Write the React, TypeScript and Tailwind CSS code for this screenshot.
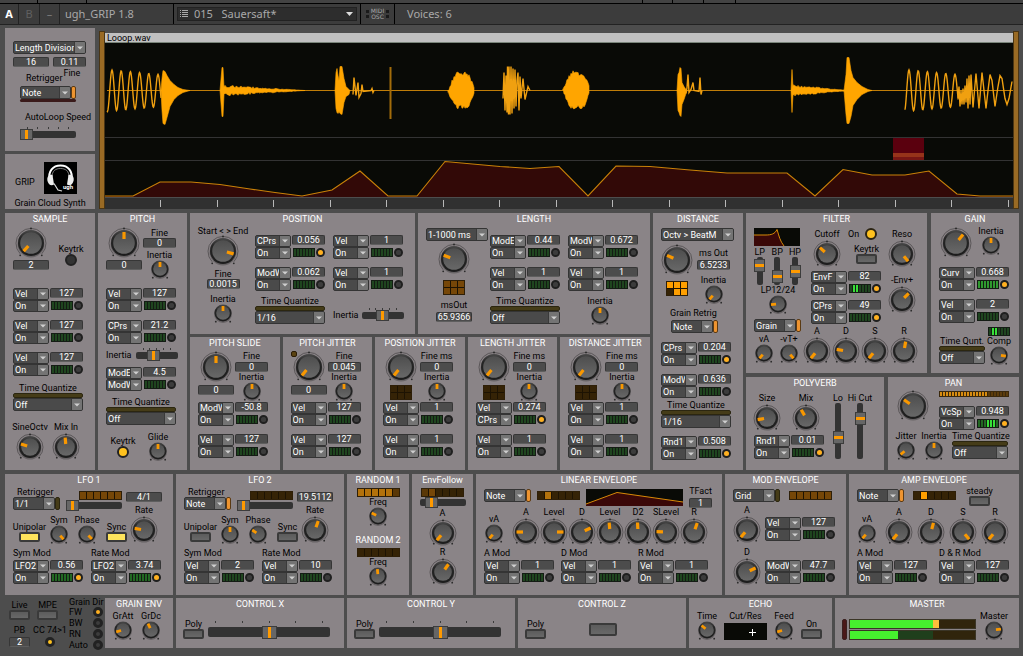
import { useState } from 'react';
import type { ReactNode } from 'react';
import clsx from 'clsx';

type KnobSize = 'sm' | 'md' | 'lg';

const KNOBS = {
    sm: { w: 20, h: 18, body: 9, face: 7, from: 2, to: 7, ring: 0 },
    md: { w: 26, h: 26, body: 11.5, face: 9, from: 3, to: 9.5, ring: 13 },
    lg: { w: 30, h: 30, body: 13.5, face: 11, from: 4, to: 11, ring: 15 },
};

function Defs() {
    return (
        <svg className="absolute size-0" aria-hidden="true">
            <defs>
                <linearGradient id="face" x1="0" y1="0" x2="0" y2="1">
                    <stop offset="0" stopColor="#4e4e4e" />
                    <stop offset="1" stopColor="#686868" />
                </linearGradient>
                <linearGradient id="rim" x1="0" y1="0" x2="0" y2="1">
                    <stop offset="0" stopColor="#4a4a4a" />
                    <stop offset="0.3" stopColor="#262626" />
                    <stop offset="1" stopColor="#1c1c1c" />
                </linearGradient>
            </defs>
        </svg>
    );
}

function Knob({ label, name, size = 'sm', angle = 0 }: { label?: string; name?: string; size?: KnobSize; angle?: number }) {
    const [value, setValue] = useState(angle);
    const k = KNOBS[size];
    const cx = k.w / 2;
    const cy = k.h / 2;
    const d = k.body * 0.8;
    return (
        <label
            className={clsx(
                'relative flex shrink-0 flex-col items-center',
                size === 'sm' && 'w-5',
                size === 'md' && 'w-[26px] gap-0.5',
                size === 'lg' && 'w-[30px]'
            )}
        >
            {label && <span className="whitespace-nowrap">{label}</span>}
            <svg width={k.w} height={k.h} className="block overflow-visible">
                {k.ring > 0 && (
                    <path
                        d={`M${cx - k.ring * 0.72} ${cy + k.ring * 0.72}A${k.ring} ${k.ring} 0 1 1 ${cx + k.ring * 0.72} ${cy + k.ring * 0.72}`}
                        fill="none"
                        stroke="#5a5658"
                        strokeWidth="1"
                    />
                )}
                <circle cx={cx - d} cy={cy + d + 1.5} r="0.9" fill="#2a2a2a" />
                <circle cx={cx + d} cy={cy + d + 1.5} r="0.9" fill="#2a2a2a" />
                {k.ring > 0 && <circle cx={cx} cy={cy - k.ring + 0.5} r="1" fill="#2a2a2a" />}
                <circle cx={cx} cy={cy + 1} r={k.body} fill="#000" opacity="0.25" />
                <circle cx={cx} cy={cy} r={k.body - 0.5} fill="url(#rim)" />
                <circle cx={cx} cy={cy} r={k.face - 0.2} fill="url(#face)" />
                <line
                    x1={cx}
                    x2={cx}
                    y1={cy - k.from}
                    y2={cy - k.to}
                    stroke="#f99800"
                    strokeWidth={size === 'sm' ? 2.8 : 3.2}
                    transform={`rotate(${value} ${cx} ${cy})`}
                />
            </svg>
            <input
                type="range"
                min={-140}
                max={140}
                value={value}
                aria-label={label ?? name}
                onChange={(e) => setValue(Number(e.target.value))}
                className="absolute inset-0 m-0 h-full w-full cursor-pointer opacity-0"
            />
        </label>
    );
}

function Num({ value, name = 'Value', className = 'w-[33px]' }: { value: string; name?: string; className?: string }) {
    return (
        <input
            defaultValue={value}
            aria-label={name}
            className={clsx(
                'block h-[10px] shrink-0 rounded-xs border border-[#363636] border-b-[#5e5e5e] bg-[#4c4c4c] p-0 text-center text-[9px] leading-[8px] text-white outline-none',
                className
            )}
        />
    );
}

function Pick({ value, options = [], name = 'Source', className = 'h-[13px] w-full' }: { value: string; options?: string[]; name?: string; className?: string }) {
    return (
        <div className={clsx('relative shrink-0 overflow-hidden rounded-xs border border-[#343434] bg-[#4a4a4a]', className)}>
            <select
                aria-label={name}
                defaultValue={value}
                className="block h-full w-full appearance-none bg-transparent py-0 pr-[11px] pl-px text-[9px] leading-[10px] text-white outline-none"
            >
                {[value, ...options].map((o) => (
                    <option key={o}>{o}</option>
                ))}
            </select>
            <span className="pointer-events-none absolute inset-y-0 right-0 flex w-[11px] items-center justify-center border-l border-[#3a3a3a] bg-[#747474]">
                <svg width="6" height="4" className="block">
                    <path d="M0 0.5h6L3 3.5z" fill="#cfcfcf" />
                </svg>
            </span>
        </div>
    );
}

function PickFlag({ value, on, name, className = 'w-[47px]' }: { value: string; on?: boolean; name: string; className?: string }) {
    return (
        <div className={clsx('flex h-[13px]', className)}>
            <Pick value={value} name={name} className="h-[13px] grow" />
            <span className={clsx('w-[5px] rounded-xs border', on ? 'border-[#5a3a14] bg-[#ee9430]' : 'border-[#2b2610] bg-[#453c18]')} />
        </div>
    );
}

const METER = {
    dim: 'bg-[#1f451f]',
    mid: 'bg-[#226822]',
    high: 'bg-[#2f9a2f]',
};

function Meter({ lit = [], tone = 'dim' }: { lit?: number[]; tone?: keyof typeof METER }) {
    return (
        <span className="flex h-[9px] w-[22px] gap-px border border-[#141c14] bg-[#141c14]">
            {[0, 1, 2, 3, 4, 5, 6].map((i) => (
                <i key={i} className={clsx('grow', lit.includes(i) ? 'bg-[#38e038]' : METER[tone])} />
            ))}
        </span>
    );
}

function Led({ on }: { on?: boolean }) {
    return (
        <span className="flex size-[9px] items-center justify-center rounded-full border-2 border-[#1f1f1f] bg-[#333]">
            <i className={clsx('size-[5px] shrink-0 rounded-full', on ? 'bg-[#ffb020]' : 'bg-[#3c3c3c]')} />
        </span>
    );
}

type ModProps = { a?: string; b?: string; v: string; on?: boolean; lit?: number[]; tone?: keyof typeof METER };

function Mod({ a = 'Vel', b = 'On', v, on, lit, tone }: ModProps) {
    return (
        <div className="flex w-[71px] shrink-0 gap-px">
            <div className="w-9">
                <Pick value={a} className="h-3 w-full" />
                <Pick value={b} name="Via" className="h-3 w-full" />
            </div>
            <div className="w-[34px]">
                <Num value={v} name="Amount" />
                <div className="mt-[3px] flex gap-px pl-px">
                    <Meter lit={lit} tone={tone} />
                    <Led on={on} />
                </div>
            </div>
        </div>
    );
}

function TimeQuantize({ value, label = 'Time Quantize', className = 'w-[70px]' }: { value: string; label?: string; className?: string }) {
    return (
        <div className={clsx('shrink-0', className)}>
            <p className="text-center whitespace-nowrap">{label}</p>
            <div className="h-[5px] rounded-xs border border-[#2b2610] bg-[#453c18]" />
            <Pick value={value} name={label} options={['1/8', '1/4']} />
        </div>
    );
}

function Slider({ name, value = 50, className, ticks }: { name: string; value?: number; className?: string; ticks?: boolean }) {
    return (
        <div className={clsx('shrink-0', className)}>
            {ticks && (
                <div className="flex h-0.5 justify-between px-[7px]">
                    {[0, 1, 2, 3, 4].map((i) => (
                        <i key={i} className="w-px bg-[#3a3a3a]" />
                    ))}
                </div>
            )}
            <input
                type="range"
                aria-label={name}
                defaultValue={value}
                className="my-[2px] block h-[7px] w-full appearance-none rounded-xs bg-[#333] [&::-webkit-slider-thumb]:h-[11px] [&::-webkit-slider-thumb]:w-[13px] [&::-webkit-slider-thumb]:appearance-none [&::-webkit-slider-thumb]:border [&::-webkit-slider-thumb]:border-[#3c3c3c] [&::-webkit-slider-thumb]:bg-[linear-gradient(90deg,#666_4px,#ff9a00_4px,#ff9a00_7px,#666_7px)]"
            />
        </div>
    );
}

function VSlider({ label, value, className = 'h-[28px]' }: { label: string; value: number; className?: string }) {
    return (
        <label className="flex w-3 flex-col items-center">
            <span className="whitespace-nowrap">{label}</span>
            <input
                type="range"
                defaultValue={value}
                className={clsx(
                    'block w-[6px] appearance-none rounded-xs bg-[#333] [direction:rtl] [writing-mode:vertical-lr] [&::-webkit-slider-thumb]:h-[13px] [&::-webkit-slider-thumb]:w-[11px] [&::-webkit-slider-thumb]:appearance-none [&::-webkit-slider-thumb]:border [&::-webkit-slider-thumb]:border-[#3c3c3c] [&::-webkit-slider-thumb]:bg-[linear-gradient(180deg,#666_4px,#ff9a00_4px,#ff9a00_7px,#666_7px)]',
                    className
                )}
            />
        </label>
    );
}

function Push({ label, on, name, className = 'h-[10px] w-[21px]' }: { label?: string; on?: boolean; name?: string; className?: string }) {
    return (
        <label className="flex w-[21px] shrink-0 flex-col items-center">
            {label && <span className="whitespace-nowrap">{label}</span>}
            <button
                aria-label={label ?? name}
                aria-pressed={!!on}
                className={clsx('block rounded-xs border-2 border-[#3a3a3a]', on ? 'bg-[#ffe45c]' : 'bg-linear-to-b from-[#5c5c5c] to-[#686868]', className)}
            />
        </label>
    );
}

function Lamp({ label, on, className = 'size-3 border-2' }: { label: string; on?: boolean; className?: string }) {
    return (
        <label className="flex w-[26px] flex-col items-center">
            <span className="whitespace-nowrap">{label}</span>
            <input
                type="checkbox"
                defaultChecked={on}
                className={clsx('appearance-none rounded-full border-[#222] bg-[#333] checked:bg-[#ffc21f]', className)}
            />
        </label>
    );
}

const CELL: Record<string, string> = {
    '0': 'bg-[#352306]',
    '1': 'bg-[#5a3807]',
    '2': 'bg-[#764708]',
    '3': 'bg-[#b3720c]',
    '4': 'bg-[#ff9f00]',
};

function Cells({ levels }: { levels: string }) {
    return (
        <div className="flex h-[9px] w-[43px] shrink-0 gap-px border border-[#2e1f08] bg-[#1d1303]">
            {[...levels].map((c, i) => (
                <i key={i} className={clsx('grow', CELL[c])} />
            ))}
        </div>
    );
}

function CellGrid({ levels }: { levels: string }) {
    return (
        <div className="grid h-[15px] w-[22px] grid-cols-3 grid-rows-2 gap-px border border-[#2e1f08] bg-[#1d1303]">
            {[...levels].map((c, i) => (
                <i key={i} className={CELL[c]} />
            ))}
        </div>
    );
}

function Panel({ title, className, children }: { title?: string; className?: string; children: ReactNode }) {
    return (
        <section className={clsx('flex min-w-0 flex-col bg-[#8a8487]', title && 'pt-px', className)}>
            {title && <h2 className="text-center whitespace-nowrap text-white">{title}</h2>}
            {children}
        </section>
    );
}

/* ---------- top bar ---------- */

function TopBar() {
    return (
        <header className="font-['Noto_Sans','Open_Sans',sans-serif] text-[11px] leading-5">
            <div className="flex h-1 border-b border-black bg-[#434343]">
                <i className="w-[38px] border-r border-black" />
                <i className="w-[49px] border-r border-black" />
                <i className="grow" />
                <i className="w-[31px] border-x border-black" />
                <i className="w-[31px] border-r border-black" />
                <i className="w-[32px] border-r border-black" />
                <i className="w-[287px]" />
            </div>
            <div className="flex h-[21px] border-b border-[#222] bg-[#3c3c3c] text-[#a9a9a9]">
                <button className="w-[19px] border-r border-[#222] font-bold text-white">A</button>
                <button className="w-[21px] border-r border-[#222] text-[#606060]">B</button>
                <button className="w-5 border-r border-[#222] text-[#7a7a7a]">–</button>
                <p className="w-[114px] border-r border-black pl-[5px]">ugh_GRIP 1.8</p>
                <div className="relative m-[3px] flex w-[180px] items-center border border-[#222] bg-[#2d2d2d]">
                    <svg width="8" height="8" className="ml-0.5 shrink-0">
                        <path d="M0 0.500h1M2 0.500h6M0 2.500h1M2 2.500h6M0 4.500h1M2 4.500h6M0 6.500h1M2 6.500h6" stroke="#a9a9a9" />
                    </svg>
                    <select aria-label="Preset" className="h-full grow appearance-none pl-[6px] leading-3 outline-none">
                        <option>015&nbsp;&nbsp; Sauersaft*</option>
                    </select>
                    <svg width="7" height="4" className="pointer-events-none absolute right-[3px]">
                        <path d="M0 0h7L3.500 4z" fill="#ddd" />
                    </svg>
                </div>
                <button className="flex w-[35px] items-center justify-center gap-0.5 border-x border-black font-['DejaVu_Sans',sans-serif] text-[6px] leading-[6px]">
                    <i className="h-2 w-[3px] border-y-3 border-[#1a1a1a]" />
                    <span>
                        MIDI
                        <br />
                        OSC
                    </span>
                    <i className="h-2 w-[3px] border-y-3 border-[#1a1a1a]" />
                </button>
                <p className="pl-[12px]">Voices: 6</p>
            </div>
        </header>
    );
}

/* ---------- wave display ---------- */

// everything below is in display units, x from 105 and y from 43
const X0 = 105;
const Y0 = 43;
const MID = 90.5;

// closed shapes: [x, half height above, half height below]
const BURSTS: number[][][] = [
    [[161, 0, 0], [162, 12, 20], [163, 20, 33], [165, 19, 34], [167, 15, 27], [170, 10, 16], [174, 6, 9], [178, 3, 5], [183, 1, 2], [190, 0, 0]],
    [[220, 0, 0], [222, 23, 26], [223, 23, 26], [224, 3, 4], [225, 0, 0]],
    [[335, 0, 0], [336, 18, 18], [337, 22, 22], [338, 15, 23], [339, 10, 21], [340, 24, 23], [342, 24, 24], [344, 12, 12], [346, 4, 6], [349, 1, 4], [350, 0, 0]],
    [[677, 0, 0], [678, 16, 20], [679, 18, 22], [680, 23, 25], [681, 22, 26], [682, 8, 14], [684, 4, 9], [686, 1, 3], [687, 0, 0]],
    [[791, 0, 0], [792, 21, 22], [793, 3, 4], [794, 0, 0]],
    [[844, 0, 0], [846, 16, 24], [847, 33, 33], [849, 33, 33], [851, 20, 26], [853, 13, 15], [857, 8, 9], [862, 4, 4], [868, 1, 1], [872, 0, 0]],
];

const BLOBS: number[][][] = [
    [[448, 2], [450, 7], [454, 14], [457, 19], [462, 18], [467, 20], [470, 14], [473, 9], [475, 2]],
    [[563, 2], [566, 10], [569, 16], [573, 21], [577, 19], [582, 18], [585, 16], [588, 8], [590, 2]],
];

// open lines: [x, y above the middle]
const STROKES: number[][][] = [
    [[353, -4], [354, 13], [356, -5], [358, 8], [359, -7], [361, -3], [362, 6], [363, -1], [371, 0], [372, 2], [373, -2], [374, 0]],
    [[686, -3], [687, 3], [688, 16], [689, -2], [691, 1], [693, 8], [694, 0], [699, -1], [700, 13], [701, -4], [702, 0]],
    [
        [503, -8], [504, 18], [505, -20], [506, 15], [507, -22], [507.5, 24], [508.5, -24], [509, 24], [510, -24], [511, 24], [512, -23], [513, 22],
        [514, -18], [515, 21], [516, -16], [517, 10], [518, 18], [519, -20], [520, 14], [521, -8], [523, 12], [525, -9], [528, 4], [530, 0],
    ],
    [
        [958, -9], [959, 4], [960, -16], [961, 0], [962, -14], [963, 2], [964, -14], [965, 5], [966, -12], [967, 12], [968, -18], [969, 15],
        [970, -14], [971, 16], [973, -17], [976, 17], [979, -18], [982, 18], [986, -18], [988, 0], [990, 16], [992, 10], [995, -16], [998, 4],
        [1000, 15], [1002, 12], [1005, -8], [1007, -14], [1009, -8], [1012, 9],
    ],
];

const toPath = (points: number[][]) => points.map(([x, y], i) => `${i ? 'L' : 'M'}${x - X0} ${y - Y0}`).join('');

// repeatable noise between 0 and 1
const noise = (n: number) => Math.abs(Math.sin(n * 12.9898) * 437.585) % 1;

function burstPath(b: number[][]) {
    const top = b.map(([x, up]) => [x, MID - up]);
    const bottom = b.map(([x, , down]) => [x, MID + down]).reverse();
    return toPath([...top, ...bottom]) + 'Z';
}

function blobPath(b: number[][]) {
    const points: number[][] = [];
    b.slice(1).forEach(([x2, a2], i) => {
        const [x1, a1] = b[i];
        for (let x = x1; x < x2; x += 1) {
            const a = a1 + ((a2 - a1) * (x - x1)) / (x2 - x1);
            points.push([x, a - noise(x) * 4, a - noise(x + 7) * 4]);
        }
    });
    return burstPath(points);
}

function sine(from: number, to: number, peak: number, a0: number, a1: number) {
    const points: number[][] = [];
    for (let x = from; x <= to; x += 0.5) {
        const amp = a0 + ((a1 - a0) * (x - from)) / (to - from);
        points.push([x, MID - Math.cos(((x - peak) / 9.2) * Math.PI * 2) * amp]);
    }
    return toPath(points);
}

function tail(from: number, to: number, amp: number) {
    const points: number[][] = [];
    for (let x = from; x <= to; x += 1) {
        const a = amp * (1 - (x - from) / (to - from));
        points.push([x, a * (0.5 + noise(x) / 2), a * (0.5 + noise(x + 3) / 2)]);
    }
    return burstPath(points);
}

const GRAIN_ENV = [
    [105, 196], [133, 196], [160, 182], [191, 182], [220, 184.5], [250, 189], [275, 192.5], [302, 196], [332, 190], [360, 171],
    [388, 196], [417, 196], [445, 161.5], [500, 166.5], [530, 168.5], [559, 166.5], [588, 196], [616, 166], [650, 166.5], [690, 170],
    [727, 173], [787, 173], [815, 196], [843, 169.5], [872, 175], [905, 175], [929, 171], [957, 194], [980, 196], [1013, 196],
];

function WaveDisplay() {
    return (
        <div className="flex min-w-0 pt-[3px] pl-px">
            <div className="w-[6px] border border-[#4a3514] bg-[#996a24]" />
            <div className="flex min-w-0 grow flex-col pt-0.5">
                <p className="h-[10px] border-b border-[#7a857a] bg-[#c0c0c0] pl-0.5 text-black">Looop.wav</p>
                <svg viewBox="0 0 908 154" preserveAspectRatio="none" className="block h-[154px] w-full bg-[#090a06]">
                    <path d="M0 94.500H908M0 117.500H908" stroke="#333" />
                    <path d="M2 47.500H908" stroke="#c07d08" strokeWidth="1" />
                    <g fill="#ffa500" stroke="#ffa500" strokeWidth="0.6">
                        {BURSTS.map((b, i) => (
                            <path key={i} d={burstPath(b)} />
                        ))}
                        {BLOBS.map((b, i) => (
                            <path key={i} d={blobPath(b)} />
                        ))}
                        <path d={tail(224, 305, 6)} />
                        <path d={tail(793, 850, 6)} />
                    </g>
                    <path d="M285.500 24V76" stroke="#a36c0a" strokeWidth="2" />
                    <g fill="none" stroke="#f0a010" strokeWidth="1.4">
                        <path d={sine(107, 161, 112, 21, 16)} />
                        <path d={sine(905, 958, 909, 21, 16)} />
                        {STROKES.map((s, i) => (
                            <path key={i} d={toPath(s.map(([x, y]) => [x, MID - y]))} />
                        ))}
                    </g>
                    <path d="M788 95h31v15h-31z" fill="#5a000e" />
                    <path d="M788 110h31v4h-31z" fill="#96331a" />
                    <path d="M788 114h31v3h-31z" fill="#771614" />
                    <path d={`${toPath(GRAIN_ENV)}V154H0Z`} fill="#320907" />
                    <path d={toPath(GRAIN_ENV)} fill="none" stroke="#c98208" strokeWidth="1.1" />
                </svg>
                <svg viewBox="0 0 908 11" preserveAspectRatio="none" className="mt-px block h-[11px] w-full bg-[#303030]">
                    {Array.from({ length: 16 }, (_, i) => (
                        <path key={i} d={`M${Math.round(55 + i * 56.500) + 0.5} 2V9`} stroke="#b8b8b8" />
                    ))}
                </svg>
            </div>
            <div className="w-[6px] border border-[#4a3514] bg-[#996a24]" />
        </div>
    );
}

function Logo() {
    return (
        <svg width="33" height="32" viewBox="0 0 33 32" className="block bg-black">
            <path d="M5.500 18C4 9 9 3.500 16.500 3.500S29 9 27.500 18" fill="none" stroke="#fff" strokeWidth="2" />
            <path d="M8 15C8 9 11.500 6.500 16.500 6.500S25 9 25 15" fill="none" stroke="#999" strokeWidth="0.8" />
            <path d="M8.500 13C5 12 2.500 15 3.500 19S7.500 24 10 22.500z" fill="#eee" />
            <path d="M24.500 13C28 12 30.500 15 29.500 19S25.500 24 23 22.500z" fill="#eee" />
            <path d="M10 21.500L14 28l4 1" fill="none" stroke="#ddd" strokeWidth="1.2" />
            <text x="19" y="27" fontSize="6" fontWeight="700" fill="#fff">
                ugh
            </text>
        </svg>
    );
}

function LoopPanel() {
    return (
        <Panel className="pt-[13px] pb-[11px] pl-2">
            <Pick value="Length Division" name="Length mode" className="h-[13px] w-[73px]" />
            <div className="mt-[3px] flex gap-1">
                <Num value="16" name="Division" className="w-9" />
                <Num value="0.11" name="Fine" />
            </div>
            <div className="mt-px flex h-[15px] gap-px pl-[13px]">
                <span className="pt-[5px]">Retrigger</span>
                <span>Fine</span>
            </div>
            <div className="mt-[3px] ml-[7px] w-[56px]">
                <PickFlag value="Note" on name="Retrigger" className="w-full" />
                <div className="h-[3px] rounded-xs bg-[#3a1a1a]" />
            </div>
            <p className="mt-[10px] pl-3 whitespace-nowrap">AutoLoop Speed</p>
            <Slider name="AutoLoop Speed" value={0} ticks className="mt-[5px] ml-[7px] w-[56px]" />
        </Panel>
    );
}

/* ---------- oscillator style panels ---------- */

function SamplePanel() {
    return (
        <Panel title="SAMPLE" className="pb-[9px]">
            <div className="mt-1 flex gap-[9px] pl-2">
                <div className="flex w-9 flex-col items-center gap-0.5">
                    <Knob name="Sample" size="lg" angle={-138} />
                    <Num value="2" name="Sample" className="w-9" />
                </div>
                <div className="pt-4">
                    <Lamp label="Keytrk" />
                </div>
            </div>
            <div className="mt-[18px] flex flex-col gap-2 pl-2">
                <Mod v="127" />
                <Mod v="127" />
                <Mod v="127" />
            </div>
            <div className="mt-[7px] pl-2">
                <TimeQuantize value="Off" />
            </div>
            <div className="mt-[11px] flex gap-[10px] pl-3">
                <Knob label="SineOctv" size="md" angle={-72} />
                <Knob label="Mix In" size="md" angle={-5} />
            </div>
        </Panel>
    );
}

function PitchPanel() {
    return (
        <Panel title="PITCH" className="pb-[9px]">
            <div className="mt-1 flex gap-px pl-2">
                <div className="flex w-9 flex-col items-center gap-0.5">
                    <Knob name="Pitch" size="lg" angle={0} />
                    <Num value="0" name="Pitch" className="w-9" />
                </div>
                <div className="flex w-[33px] flex-col items-center">
                    <span>Fine</span>
                    <Num value="0" name="Fine" />
                    <div className="mt-0.5">
                        <Knob label="Inertia" />
                    </div>
                </div>
            </div>
            <div className="mt-[10px] flex flex-col gap-2 pl-2">
                <Mod v="127" />
                <Mod a="CPrs" v="21.2" />
            </div>
            <div className="mt-1 flex items-center gap-1 pl-2">
                <span>Inertia</span>
                <Slider name="Pitch inertia" value={40} ticks className="w-[42px]" />
            </div>
            <div className="mt-[6px] pl-2">
                <Mod a="ModE" b="ModW" v="4.5" />
            </div>
            <div className="mt-[6px] pl-2">
                <TimeQuantize value="Off" />
            </div>
            <div className="mt-[7px] flex gap-3 pl-3">
                <div className="pt-1">
                    <Lamp label="Keytrk" on />
                </div>
                <Knob label="Glide" />
            </div>
        </Panel>
    );
}

function PositionPanel() {
    return (
        <Panel title="POSITION" className="pb-[10px]">
            <div className="flex pl-2">
                <div className="flex w-[50px] flex-col items-center pt-0.5">
                    <span className="whitespace-nowrap">Start &lt; &gt; End</span>
                    <Knob name="Position" size="lg" angle={105} />
                    <span className="mt-[3px]">Fine</span>
                    <Num value="0.0015" name="Fine position" />
                    <div className="mt-[5px]">
                        <Knob label="Inertia" />
                    </div>
                </div>
                <div className="pt-[11px] pl-[7px]">
                    <div className="grid grid-cols-[71px_71px] gap-x-[7px] gap-y-2">
                        <Mod a="CPrs" v="0.056" on />
                        <Mod v="1" />
                        <Mod a="ModW" v="0.062" />
                        <Mod v="1" />
                    </div>
                    <div className="mt-[5px] flex items-end gap-2">
                        <TimeQuantize value="1/16" />
                        <div className="mb-[3px] flex items-center gap-[3px]">
                            <span>Inertia</span>
                            <Slider name="Position inertia" ticks className="w-[42px]" />
                        </div>
                    </div>
                </div>
            </div>
        </Panel>
    );
}

function LengthPanel() {
    return (
        <Panel title="LENGTH" className="pb-[10px]">
            <div className="flex pl-2">
                <div className="flex w-[62px] flex-col items-start pt-1">
                    <Pick value="1-1000 ms" name="Length range" className="h-[13px] w-[62px]" />
                    <div className="mt-[3px] flex w-14 flex-col items-center">
                        <Knob name="Length" size="lg" angle={-70} />
                        <div className="mt-[6px]">
                            <CellGrid levels="222222" />
                        </div>
                        <span className="mt-[5px]">msOut</span>
                        <Num value="65.9366" name="msOut" className="mt-[2px] w-9" />
                    </div>
                </div>
                <div className="pt-[11px] pl-0.5">
                    <div className="grid grid-cols-[71px_71px] gap-x-[7px] gap-y-2">
                        <Mod a="ModE" v="0.44" />
                        <Mod a="ModW" v="0.672" />
                        <Mod v="1" />
                        <Mod v="1" />
                    </div>
                    <div className="mt-[5px] flex gap-[30px]">
                        <TimeQuantize value="Off" />
                        <Knob label="Inertia" />
                    </div>
                </div>
            </div>
        </Panel>
    );
}

type JitterProps = { title: string; fine: string; fineValue: string; main?: string; angle?: number; flag?: boolean; mods: [ModProps, ModProps] };

function JitterPanel({ title, fine, fineValue, main, angle = -140, flag, mods }: JitterProps) {
    return (
        <Panel title={title} className="pb-[11px]">
            <div className="mt-[3px] flex h-[51px] gap-px pl-2">
                <div className="relative flex w-9 flex-col items-center gap-[3px] pt-px">
                    {flag && <i className="absolute top-0 left-0 size-[6px] rounded-xs border border-[#2a1c05] bg-[#5a4210]" />}
                    <Knob name={title} size="lg" angle={angle} />
                    {main !== undefined ? <Num value={main} name={title} className="w-9" /> : <CellGrid levels="000000" />}
                </div>
                <div className="flex w-[33px] flex-col items-center">
                    <span className="whitespace-nowrap">{fine}</span>
                    <Num value={fineValue} name={fine} className="mt-px w-[33px]" />
                    <Knob label="Inertia" />
                </div>
            </div>
            <div className="flex flex-col gap-2 pl-2">
                <Mod {...mods[0]} />
                <Mod {...mods[1]} />
            </div>
        </Panel>
    );
}

function DistancePanel() {
    return (
        <Panel title="DISTANCE" className="pb-[10px] [&>div]:pl-2">
            <div className="mt-1">
                <Pick value="Octv > BeatM" name="Distance unit" className="h-[13px] w-[73px]" />
            </div>
            <div className="mt-1 flex gap-1">
                <div className="flex w-8 flex-col items-center gap-[6px]">
                    <Knob name="Distance" size="lg" angle={-65} />
                    <CellGrid levels="444044" />
                </div>
                <div className="flex w-[33px] flex-col items-center pt-[3px]">
                    <span className="whitespace-nowrap">ms Out</span>
                    <Num value="6.5233" name="ms Out" className="mt-[2px] w-[33px]" />
                    <div className="mt-[5px]">
                        <Knob label="Inertia" angle={-140} />
                    </div>
                </div>
            </div>
            <div className="mt-[5px]">
                <p className="pl-[9px]">Grain Retrig</p>
                <PickFlag value="Note" on name="Grain Retrig" className="mt-0.5 ml-[10px] w-[47px]" />
            </div>
            <div className="mt-[9px] flex flex-col gap-2">
                <Mod a="CPrs" v="0.204" on />
                <Mod a="ModW" v="0.636" />
            </div>
            <div className="mt-0.5">
                <TimeQuantize value="1/16" />
            </div>
            <div className="mt-2">
                <Mod a="Rnd1" v="0.508" on />
            </div>
        </Panel>
    );
}

function FilterPanel() {
    return (
        <Panel title="FILTER" className="pb-2">
            <div className="flex pl-2">
                <div className="w-[47px] pt-1">
                    <svg width="46" height="18" className="block bg-[#090a06]">
                        <path d="M0 7H12C17 7 21 6 23 1.500C25 8 26 13 30 18H0z" fill="#3a0808" />
                        <path d="M0 7H12C17 7 21 6 23 1.500C25 8 26 13 30 18" fill="none" stroke="#d88a08" />
                    </svg>
                    <div className="mt-px flex gap-[6px]">
                        <VSlider label="LP" value={85} />
                        <VSlider label="BP" value={15} />
                        <VSlider label="HP" value={50} />
                    </div>
                    <div className="flex w-12 justify-center">
                        <Knob label="LP12/24" angle={-95} />
                    </div>
                    <PickFlag value="Grain" on name="Filter mode" className="mt-[6px] w-full" />
                    <div className="mt-0.5 flex gap-[5px]">
                        <Knob label="vA" angle={-140} />
                        <Knob label="-vT+" angle={140} />
                    </div>
                </div>
                <div className="pt-[5px]">
                    <div className="flex">
                        <div className="w-[110px] pl-[10px]">
                            <div className="flex h-[42px] gap-2 pl-[3px]">
                                <Knob label="Cutoff" size="md" angle={-48} />
                                <div className="pt-px">
                                    <label className="flex h-2 items-center gap-[6px]">
                                        On
                                        <input
                                            type="checkbox"
                                            defaultChecked
                                            className="size-3 appearance-none rounded-full border-2 border-[#2c2412] bg-[#333] checked:bg-[#ffc21f]"
                                        />
                                    </label>
                                    <div className="mt-[6px] pl-2">
                                        <Push label="Keytrk" />
                                    </div>
                                </div>
                            </div>
                            <div className="flex flex-col gap-[5px]">
                                <Mod a="EnvF" v="82" on lit={[1, 2]} />
                                <Mod a="CPrs" v="49" on />
                            </div>
                        </div>
                        <div className="-ml-[22px] flex flex-col gap-2">
                            <Knob label="Reso" size="md" angle={140} />
                            <Knob label="-Env+" size="md" angle={45} />
                        </div>
                    </div>
                    <div className="mt-0.5 flex gap-[3px] pl-[3px]">
                        <Knob label="A" size="md" angle={-140} />
                        <Knob label="D" size="md" angle={-80} />
                        <Knob label="S" size="md" angle={-140} />
                        <Knob label="R" size="md" angle={10} />
                    </div>
                </div>
            </div>
        </Panel>
    );
}

function GainPanel() {
    return (
        <Panel title="GAIN" className="pb-[9px]">
            <div className="mt-0.5 flex h-10 gap-[10px] pl-[10px]">
                <div className="pt-0.5">
                    <Knob name="Gain" size="lg" angle={40} />
                </div>
                <Knob label="Inertia" />
            </div>
            <div className="mt-[1px] flex flex-col gap-2 pl-2">
                <Mod a="Curv" v="0.668" on tone="high" />
                <Mod v="2" />
            </div>
            <div className="mt-1 flex justify-end pr-[9px]">
                <Meter lit={[1, 2]} />
            </div>
            <div className="flex gap-1 pl-2">
                <TimeQuantize value="Off" label="Time Qunt." className="w-[46px]" />
                <Knob label="Comp" angle={100} />
            </div>
        </Panel>
    );
}

function PolyverbPanel() {
    return (
        <Panel title="POLYVERB">
            <div className="flex gap-[7px] pt-[5px] pl-2">
                <div>
                    <div className="flex gap-[13px]">
                        <Knob label="Size" size="md" angle={-100} />
                        <Knob label="Mix" size="md" angle={-30} />
                    </div>
                    <div className="mt-1">
                        <Mod a="Rnd1" v="0.01" on />
                    </div>
                </div>
                <div className="flex gap-[10px]">
                    <VSlider label="Lo" value={35} className="h-[56px]" />
                    <VSlider label="Hi Cut" value={79} className="h-[56px]" />
                </div>
            </div>
        </Panel>
    );
}

function PanPanel() {
    return (
        <Panel title="PAN" className="pb-2">
            <div className="flex h-[43px] gap-[11px] pt-[3px] pl-[10px]">
                <Knob name="Pan" size="lg" angle={-55} />
                <div className="w-[71px]">
                    <div className="flex h-[6px] w-[70px] gap-px border border-[#3a280c] bg-[#3a280c]">
                        {Array.from({ length: 23 }, (_, i) => (
                            <i key={i} className={clsx('grow', i < 16 ? 'bg-[#d88c10]' : 'bg-[#5c3c0c]')} />
                        ))}
                    </div>
                    <div className="mt-[9px]">
                        <Mod a="VcSp" v="0.948" on tone="mid" lit={[3, 4, 5]} />
                    </div>
                </div>
            </div>
            <div className="flex gap-2 pl-2">
                <Knob label="Jitter" angle={-130} />
                <Knob label="Inertia" />
                <TimeQuantize value="Off" className="w-[56px]" />
            </div>
        </Panel>
    );
}

/* ---------- modulation row ---------- */

type LfoProps = {
    title: string;
    retrigger: string;
    retriggerOn?: boolean;
    levels: string;
    rate: string;
    rateWidth: string;
    angles: [number, number, number];
    unipolar?: boolean;
    sync?: boolean;
    mods: [ModProps, ModProps];
};

function LfoPanel(p: LfoProps) {
    return (
        <Panel title={p.title} className="pb-[11px]">
            <div className="flex pl-2">
                <div className="w-[113px] pt-0.5">
                    <div className="flex h-[26px] gap-[6px]">
                        <div>
                            <p className="pl-1">Retrigger</p>
                            <PickFlag value={p.retrigger} on={p.retriggerOn} name="Retrigger" />
                        </div>
                        <div className="w-[56px] pt-1">
                            <div className="flex justify-end">
                                <Cells levels={p.levels} />
                            </div>
                            <Slider name="Phase offset" value={0} className="mt-0.5 w-full" />
                        </div>
                    </div>
                    <div className="mt-0.5 flex pl-[6px]">
                        <div className="pt-[7px]">
                            <Push label="Unipolar" on={p.unipolar} />
                        </div>
                        <div className="flex gap-2 px-[9px]">
                            <Knob label="Sym" angle={p.angles[0]} />
                            <Knob label="Phase" angle={p.angles[1]} />
                        </div>
                        <div className="pt-[7px]">
                            <Push label="Sync" on={p.sync} />
                        </div>
                    </div>
                </div>
                <div className="flex w-9 flex-col items-center gap-[3px] pt-[7px]">
                    <Num value={p.rate} name="Rate" className={p.rateWidth} />
                    <Knob label="Rate" size="md" angle={p.angles[2]} />
                </div>
            </div>
            <div className="mt-[5px] flex gap-[7px] pl-2">
                <LabelledMod label="Sym Mod" {...p.mods[0]} />
                <LabelledMod label="Rate Mod" {...p.mods[1]} />
            </div>
        </Panel>
    );
}

function RandomPanel() {
    return (
        <Panel title="RANDOM 1">
            <div className="mt-[3px] flex flex-col items-center">
                <Cells levels="333331" />
                <Knob label="Freq" angle={-65} />
            </div>
            <h2 className="mt-[10px] text-center whitespace-nowrap text-white">RANDOM 2</h2>
            <div className="mt-[3px] flex flex-col items-center">
                <Cells levels="000000" />
                <Knob label="Freq" angle={-5} />
            </div>
        </Panel>
    );
}

function EnvFollowPanel() {
    return (
        <Panel title="EnvFollow">
            <div className="mt-[3px] flex flex-col items-center">
                <Cells levels="120000" />
                <Slider name="Follow gain" value={16} className="w-[46px]" />
                <Knob label="A" size="md" angle={-140} />
                <div className="mt-px">
                    <Knob label="R" size="md" angle={35} />
                </div>
            </div>
        </Panel>
    );
}

function LabelledMod({ label, ...mod }: ModProps & { label: string }) {
    return (
        <div className="flex flex-col gap-0.5">
            <span className="whitespace-nowrap">{label}</span>
            <Mod {...mod} />
        </div>
    );
}

function LinearEnvelopePanel() {
    return (
        <Panel title="LINEAR ENVELOPE">
            <div className="flex h-[22px] gap-[6px] pt-1 pl-2">
                <PickFlag value="Note" on name="Trigger" />
                <div className="pt-0.5">
                    <Cells levels="030000" />
                </div>
                <svg width="97" height="17" className="block bg-[#090a06]">
                    <path d="M0 15L31 3.500L97 13V17H0z" fill="#3a0808" />
                    <path d="M0 15L31 3.500L97 13" fill="none" stroke="#d88a08" />
                </svg>
                <label className="-mt-[3px] flex w-[23px] flex-col items-center gap-0.5">
                    TFact
                    <Num value="1" name="TFact" className="w-[23px]" />
                </label>
            </div>
            <div className="flex gap-[9px] pl-2">
                <div className="pt-[7px]">
                    <Knob label="vA" angle={-140} />
                </div>
                <div className="flex gap-[2px]">
                    <Knob label="A" size="md" angle={-90} />
                    <Knob label="Level" size="md" angle={90} />
                    <Knob label="D" size="md" angle={65} />
                    <Knob label="Level" size="md" angle={-5} />
                    <Knob label="D2" size="md" angle={-3} />
                    <Knob label="SLevel" size="md" angle={-88} />
                    <Knob label="R" size="md" angle={20} />
                </div>
            </div>
            <div className="mt-[3px] flex gap-[6px] pl-2">
                <LabelledMod label="A Mod" v="1" />
                <LabelledMod label="D Mod" v="1" />
                <LabelledMod label="R Mod" v="1" />
            </div>
        </Panel>
    );
}

function ModEnvelopePanel() {
    return (
        <Panel title="MOD ENVELOPE">
            <div className="flex h-5 gap-[9px] pt-1 pl-2">
                <PickFlag value="Grid" name="Trigger" />
                <div className="pt-0.5">
                    <Cells levels="222222" />
                </div>
            </div>
            <div className="flex gap-[5px] pl-[9px]">
                <div className="flex flex-col gap-1">
                    <Knob label="A" size="md" angle={-140} />
                    <Knob label="D" size="md" angle={65} />
                </div>
                <div className="flex flex-col gap-[19px] pt-3">
                    <Mod v="127" />
                    <Mod a="ModW" v="47.7" />
                </div>
            </div>
        </Panel>
    );
}

function AmpEnvelopePanel() {
    return (
        <Panel title="AMP ENVELOPE">
            <div className="flex h-[22px] pl-2">
                <div className="pt-1">
                    <PickFlag value="Note" on name="Trigger" />
                </div>
                <div className="pt-[6px] pl-[9px]">
                    <Cells levels="040000" />
                </div>
                <div className="pt-px pl-[13px]">
                    <Push label="steady" />
                </div>
            </div>
            <div className="flex gap-[9px] pl-2">
                <div className="pt-[7px]">
                    <Knob label="vA" angle={-140} />
                </div>
                <div className="flex gap-[6px]">
                    <Knob label="A" size="md" angle={-140} />
                    <Knob label="D" size="md" angle={15} />
                    <Knob label="S" size="md" angle={140} />
                    <Knob label="R" size="md" angle={-140} />
                </div>
            </div>
            <div className="mt-[3px] flex gap-[11px] pl-2">
                <LabelledMod label="A Mod" v="127" />
                <LabelledMod label="D & R Mod" v="127" />
            </div>
        </Panel>
    );
}

/* ---------- bottom row ---------- */

function GlobalSettings() {
    return (
        <div className="flex min-w-0 gap-[6px] pl-1">
            <div className="pt-0.5">
                <div className="flex gap-[7px]">
                    <Push label="Live" />
                    <Push label="MPE" />
                </div>
                <div className="mt-[5px] flex gap-[7px]">
                    <label className="flex w-[21px] flex-col items-center gap-0.5">
                        PB
                        <Num value="2" name="PB" className="w-[21px]" />
                    </label>
                    <Lamp label="CC 74>1" on className="mt-0.5 size-[10px] border-[3px]" />
                </div>
            </div>
            <fieldset className="-mb-1 w-[33px]">
                <legend className="h-2 leading-2 whitespace-nowrap">Grain Dir</legend>
                {['FW', 'BW', 'RN', 'Auto'].map((d) => (
                    <label key={d} className="flex h-[11px] items-center justify-between">
                        {d}
                        <input
                            type="radio"
                            name="dir"
                            defaultChecked={d === 'FW'}
                            className="size-[10px] shrink-0 appearance-none rounded-full border-[3px] border-[#222] bg-[#3c3c3c] checked:bg-[#ffb020]"
                        />
                    </label>
                ))}
            </fieldset>
        </div>
    );
}

function ControlPanel({ title, children }: { title: string; children: ReactNode }) {
    return (
        <Panel title={title} className="pb-[9px]">
            <div className="flex gap-1 pt-[10px] pl-[7px]">
                <Push label="Poly" />
                {children}
            </div>
        </Panel>
    );
}

function WideSlider({ name }: { name: string }) {
    return (
        <div className="w-[122px]">
            <div className="mt-0.5 flex h-0.5 justify-between px-[7px]">
                {[0, 1, 2, 3, 4].map((i) => (
                    <i key={i} className="w-px bg-[#3a3a3a]" />
                ))}
            </div>
            <input
                type="range"
                aria-label={name}
                className="mt-[4px] block h-[10px] w-full appearance-none rounded-xs bg-[#333] [&::-webkit-slider-thumb]:h-[13px] [&::-webkit-slider-thumb]:w-[15px] [&::-webkit-slider-thumb]:appearance-none [&::-webkit-slider-thumb]:border [&::-webkit-slider-thumb]:border-[#3c3c3c] [&::-webkit-slider-thumb]:bg-[linear-gradient(90deg,#666_5px,#ff9a00_5px,#ff9a00_8px,#666_8px)]"
            />
        </div>
    );
}

function EchoPanel() {
    return (
        <Panel title="ECHO">
            <div className="flex gap-[7px] pt-0.5 pl-2">
                <Knob label="Time" angle={-50} />
                <div className="flex w-[43px] flex-col items-center gap-0.5">
                    <span>Cut/Res</span>
                    <svg width="43" height="17" className="block bg-[#090a06]">
                        <path d="M25 9.500H32M28.500 6V13" stroke="#fff" />
                    </svg>
                </div>
                <Knob label="Feed" angle={-105} />
                <div className="pt-2">
                    <Push label="On" />
                </div>
            </div>
        </Panel>
    );
}

const LEVELS = [
    [{ size: 66, color: '#46f02e' }, { size: 5, color: '#ffbe3c' }, { size: 29, color: '#30250c' }],
    [{ size: 38, color: '#46f02e' }, { size: 28, color: '#1f3f1c' }, { size: 34, color: '#30250c' }],
];

function MasterPanel() {
    return (
        <Panel title="MASTER">
            <div className="flex gap-0.5 pt-0.5 pl-[7px]">
                <i className="mt-2 h-[21px] w-[5px] rounded-xs border border-[#3a2020] bg-[#4a1818]" />
                <div className="flex w-[127px] flex-col gap-px pt-2">
                    {LEVELS.map((row, i) => (
                        <div key={i} className="flex h-[10px] border border-[#3a3526]">
                            {row.map((s) => (
                                <i key={s.color} style={{ width: `${s.size}%`, backgroundColor: s.color }} />
                            ))}
                        </div>
                    ))}
                </div>
                <div className="pl-[6px]">
                    <Knob label="Master" angle={82} />
                </div>
            </div>
        </Panel>
    );
}

export default function App() {
    return (
        <div className="min-h-screen bg-[#4d4d4d] font-['Roboto','Liberation_Sans',sans-serif] text-[9px] leading-[10px] text-black">
            <Defs />
            <TopBar />
            <main className="flex flex-col gap-[3px] pt-[3px] pr-1 pb-2 pl-[5px]">
                <div className="grid grid-cols-[90fr_921fr] gap-[3px] pb-px">
                    <div className="flex flex-col gap-[3px]">
                        <LoopPanel />
                        <Panel className="grow pt-2">
                            <div className="flex items-center gap-[9px] pl-[10px]">
                                <span className="pt-2">GRIP</span>
                                <Logo />
                            </div>
                            <p className="mt-1 text-center whitespace-nowrap">Grain Cloud Synth</p>
                        </Panel>
                    </div>
                    <WaveDisplay />
                </div>

                <div className="grid grid-cols-[90fr_89fr_460fr_90fr_273fr] gap-[3px] pb-px">
                    <SamplePanel />
                    <PitchPanel />
                    <div className="flex min-w-0 flex-col gap-[3px]">
                        <div className="grid grid-cols-[225fr_232fr] gap-[3px]">
                            <PositionPanel />
                            <LengthPanel />
                        </div>
                        <div className="grid grow grid-cols-5 gap-[3px]">
                            <JitterPanel title="PITCH SLIDE" fine="Fine" fineValue="0" main="0" angle={0} mods={[{ a: 'ModW', v: '-50.8' }, { v: '127' }]} />
                            <JitterPanel title="PITCH JITTER" fine="Fine" fineValue="0.045" main="0" flag mods={[{ v: '127' }, { v: '127' }]} />
                            <JitterPanel title="POSITION JITTER" fine="Fine ms" fineValue="0" mods={[{ v: '1' }, { v: '1' }]} />
                            <JitterPanel title="LENGTH JITTER" fine="Fine ms" fineValue="0" mods={[{ b: 'CPrs', v: '0.274', on: true }, { v: '1' }]} />
                            <JitterPanel title="DISTANCE JITTER" fine="Fine ms" fineValue="0" mods={[{ v: '1' }, { v: '1' }]} />
                        </div>
                    </div>
                    <DistancePanel />
                    <div className="flex min-w-0 flex-col gap-1">
                        <div className="grid grid-cols-[181fr_88fr] gap-1">
                            <FilterPanel />
                            <GainPanel />
                        </div>
                        <div className="grid grow grid-cols-[138fr_131fr] gap-1">
                            <PolyverbPanel />
                            <PanPanel />
                        </div>
                    </div>
                </div>

                <div className="grid grid-cols-[168fr_168fr_62fr_61fr_246fr_121fr_170fr] gap-[3px]">
                    <LfoPanel
                        title="LFO 1"
                        retrigger="1/1"
                        levels="222222"
                        rate="4/1"
                        rateWidth="w-9"
                        angles={[140, 135, -80]}
                        unipolar
                        sync
                        mods={[{ a: 'LFO2', v: '0.56', on: true, tone: 'mid' }, { a: 'LFO2', v: '3.74', on: true, tone: 'mid' }]}
                    />
                    <LfoPanel
                        title="LFO 2"
                        retrigger="Note"
                        retriggerOn
                        levels="000000"
                        rate="19.5112"
                        rateWidth="w-9"
                        angles={[0, -55, 20]}
                        mods={[{ v: '2' }, { v: '10' }]}
                    />
                    <RandomPanel />
                    <EnvFollowPanel />
                    <LinearEnvelopePanel />
                    <ModEnvelopePanel />
                    <AmpEnvelopePanel />
                </div>

                <div className="grid grid-cols-[97fr_68fr_168fr_168fr_168fr_143fr_184fr] gap-[3px]">
                    <GlobalSettings />
                    <Panel title="GRAIN ENV">
                        <div className="flex gap-2 pt-0.5 pl-2">
                            <Knob label="GrAtt" angle={-105} />
                            <Knob label="GrDc" angle={-25} />
                        </div>
                    </Panel>
                    <ControlPanel title="CONTROL X">
                        <WideSlider name="Control X" />
                    </ControlPanel>
                    <ControlPanel title="CONTROL Y">
                        <WideSlider name="Control Y" />
                    </ControlPanel>
                    <ControlPanel title="CONTROL Z">
                        <div className="flex pt-1 pl-[42px]">
                            <Push name="Control Z" className="h-[13px] w-7" />
                        </div>
                    </ControlPanel>
                    <EchoPanel />
                    <MasterPanel />
                </div>
            </main>
        </div>
    );
}
